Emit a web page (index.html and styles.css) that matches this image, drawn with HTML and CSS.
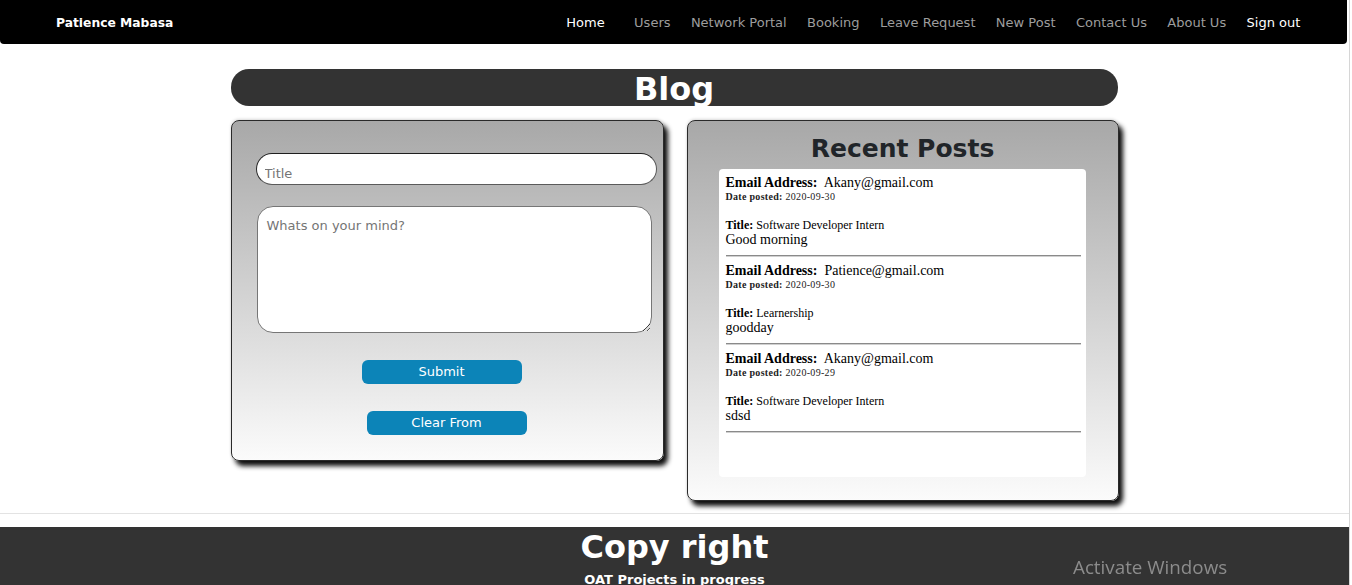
FILE: index.html
```html
<!DOCTYPE html>
<html lang="en">
<head>
<meta charset="utf-8">
<title>Blog</title>
<link rel="stylesheet" href="styles.css">
</head>
<body>
<div class="page">
  <nav class="navbar">
    <a class="brand" href="#">Patience Mabasa</a>
    <ul class="nav">
      <li><a class="active home" href="#">Home</a></li>
      <li><a href="#">Users</a></li>
      <li><a href="#">Network Portal</a></li>
      <li><a href="#">Booking</a></li>
      <li><a href="#">Leave Request</a></li>
      <li><a href="#">New Post</a></li>
      <li><a href="#">Contact Us</a></li>
      <li><a href="#">About Us</a></li>
      <li><a class="active" href="#">Sign out</a></li>
    </ul>
  </nav>

  <main class="main">
    <h1 class="banner">Blog</h1>
    <div class="cards">
      <form class="card form-card">
        <input class="title-input" type="text" placeholder="Title">
        <textarea class="mind" placeholder="Whats on your mind?"></textarea>
        <button type="button" class="btn btn-submit">Submit</button>
        <button type="button" class="btn btn-clear">Clear From</button>
      </form>

      <section class="card posts-card">
        <h2 class="posts-heading">Recent Posts</h2>
        <div class="posts">
          <div class="post">
            <div class="email"><b>Email Address:</b>&nbsp; Akany@gmail.com</div>
            <div class="date"><b>Date posted:</b> 2020-09-30</div>
            <div class="ptitle"><b>Title:</b> Software Developer Intern</div>
            <div class="body">Good morning</div>
            <hr class="sep">
          </div>
          <div class="post">
            <div class="email"><b>Email Address:</b>&nbsp; Patience@gmail.com</div>
            <div class="date"><b>Date posted:</b> 2020-09-30</div>
            <div class="ptitle"><b>Title:</b> Learnership</div>
            <div class="body">goodday</div>
            <hr class="sep">
          </div>
          <div class="post">
            <div class="email"><b>Email Address:</b>&nbsp; Akany@gmail.com</div>
            <div class="date"><b>Date posted:</b> 2020-09-29</div>
            <div class="ptitle"><b>Title:</b> Software Developer Intern</div>
            <div class="body">sdsd</div>
            <hr class="sep">
          </div>
        </div>
      </section>
    </div>
  </main>

  <hr class="footer-rule">
  <footer class="footer">
    <h1 class="copy">Copy right</h1>
    <p class="oat">OAT Projects in progress</p>
  </footer>
</div>
<div class="activate">Activate Windows</div>
</body>
</html>
```

FILE: styles.css
```css
* { box-sizing: border-box; }

html, body {
  margin: 0;
  padding: 0;
  background: #fff;
  height: 100%;
  overflow: hidden;
}

body {
  font-family: "DejaVu Sans", Verdana, sans-serif;
  color: #212529;
}

.page {
  width: 1350px;
  min-height: 585px;
  border-right: 1px solid #d6d6d6;
}

/* NAVBAR */
.navbar {
  width: 1347px;
  height: 44px;
  background: #000;
  border-radius: 0 0 4px 4px;
  display: flex;
  align-items: center;
  padding: 2px 36.5px 0 56px;
}

.brand {
  color: #fff;
  font-weight: bold;
  font-size: 12.3px;
  line-height: 20px;
  text-decoration: none;
}

.nav {
  list-style: none;
  margin: 0 0 0 auto;
  padding: 0;
  display: flex;
}

.nav a {
  display: block;
  padding: 0 10.2px;
  font-size: 13px;
  line-height: 20px;
  color: #9d9d9d;
  text-decoration: none;
}

.nav a.active { color: #fff; }
.nav a.home { margin-right: 9px; }

/* MAIN */
.main {
  width: 888px;
  margin: 0 auto;
  padding-top: 25px;
}

.banner {
  margin: 0;
  width: 887px;
  height: 37px;
  background: #333;
  border-radius: 18px;
  color: #fff;
  font-size: 32px;
  line-height: 40px;
  text-align: center;
  font-weight: bold;
}

.cards {
  display: grid;
  grid-template-columns: 433px 432px;
  column-gap: 23px;
  align-items: start;
  margin-top: 14px;
}

.card {
  border: 1px solid #2a2a2a;
  border-radius: 8px;
  background: linear-gradient(to bottom, #a8a8a8 0%, #fbfbfb 100%);
  box-shadow: 4px 5px 5px 0 rgba(0, 0, 0, 0.95), 0 -1px 3px rgba(0,0,0,0.15);
}

/* FORM CARD */
.form-card {
  height: 341px;
  margin: 0;
  padding: 32px 0 0 24px;
  display: flex;
  flex-direction: column;
  align-items: flex-start;
}

.title-input {
  width: 401px;
  height: 32px;
  border: 1px solid #5a5a5a;
  border-top-color: #1e1e1e;
  border-left-color: #2a2a2a;
  border-radius: 16px;
  background: #fff;
  padding: 9px 8px 0;
  font-family: "DejaVu Sans", Verdana, sans-serif;
  font-size: 13px;
  color: #333;
  outline: none;
}

.title-input::placeholder,
.mind::placeholder { color: #757575; }

.mind {
  margin: 21px 0 0 1px;
  width: 395px;
  height: 127px;
  border: 1px solid #767676;
  border-radius: 16px;
  background: #fff;
  padding: 11px 9px;
  font-family: "DejaVu Sans", Verdana, sans-serif;
  font-size: 13px;
  resize: vertical;
  outline: none;
}

.btn {
  width: 160px;
  height: 24px;
  border: none;
  border-radius: 6px;
  background: #0c84b8;
  color: #fff;
  font-family: "DejaVu Sans", Verdana, sans-serif;
  font-size: 13px;
  line-height: 24px;
  padding: 0;
}

.btn-submit { margin: 27px 0 0 106px; }
.btn-clear { margin: 27px 0 0 111px; }

/* POSTS CARD */
.posts-card {
  padding: 13px 0 23px 31px;
}

.posts-heading {
  margin: 0;
  text-align: center;
  padding-right: 31px;
  font-size: 25px;
  line-height: 30px;
  font-weight: bold;
  color: #212529;
}

.posts {
  margin-top: 5px;
  width: 367px;
  min-height: 308px;
  background: #fff;
  border-radius: 4px;
  padding: 6px 5px 0 7px;
  font-family: "Liberation Serif", "Times New Roman", serif;
  color: #000;
}

.post .email {
  font-size: 14px;
  line-height: 16px;
}

.post .date {
  font-size: 10px;
  line-height: 12px;
  color: #222;
  letter-spacing: 0.3px;
}

.post .ptitle {
  margin-top: 15px;
  font-size: 12px;
  line-height: 14px;
}

.post .body {
  font-size: 14px;
  line-height: 16px;
}

.sep {
  margin: 7px 0 6px;
  border: 0;
  border-top: 1px solid #8a8a8a;
  height: 2px;
  border-bottom: 1px solid #d0d0d0;
}

/* FOOTER */
.footer-rule {
  margin: 12px 0 13px;
  border: 0;
  border-top: 1px solid #e3e3e3;
  height: 0;
}

.footer {
  background: #333;
  color: #fff;
  text-align: center;
  padding-top: 1px;
  height: 80px;
}

.copy {
  margin: 0;
  font-size: 32px;
  line-height: 38px;
  font-weight: bold;
}

.oat {
  margin: 6px 0 0;
  font-size: 13px;
  line-height: 16px;
  font-weight: bold;
}

.activate {
  position: fixed;
  left: 1073px;
  top: 555px;
  font-family: "Open Sans", "Noto Sans", sans-serif;
  font-size: 18.8px;
  line-height: 24px;
  color: #8c8c8c;
}
```
